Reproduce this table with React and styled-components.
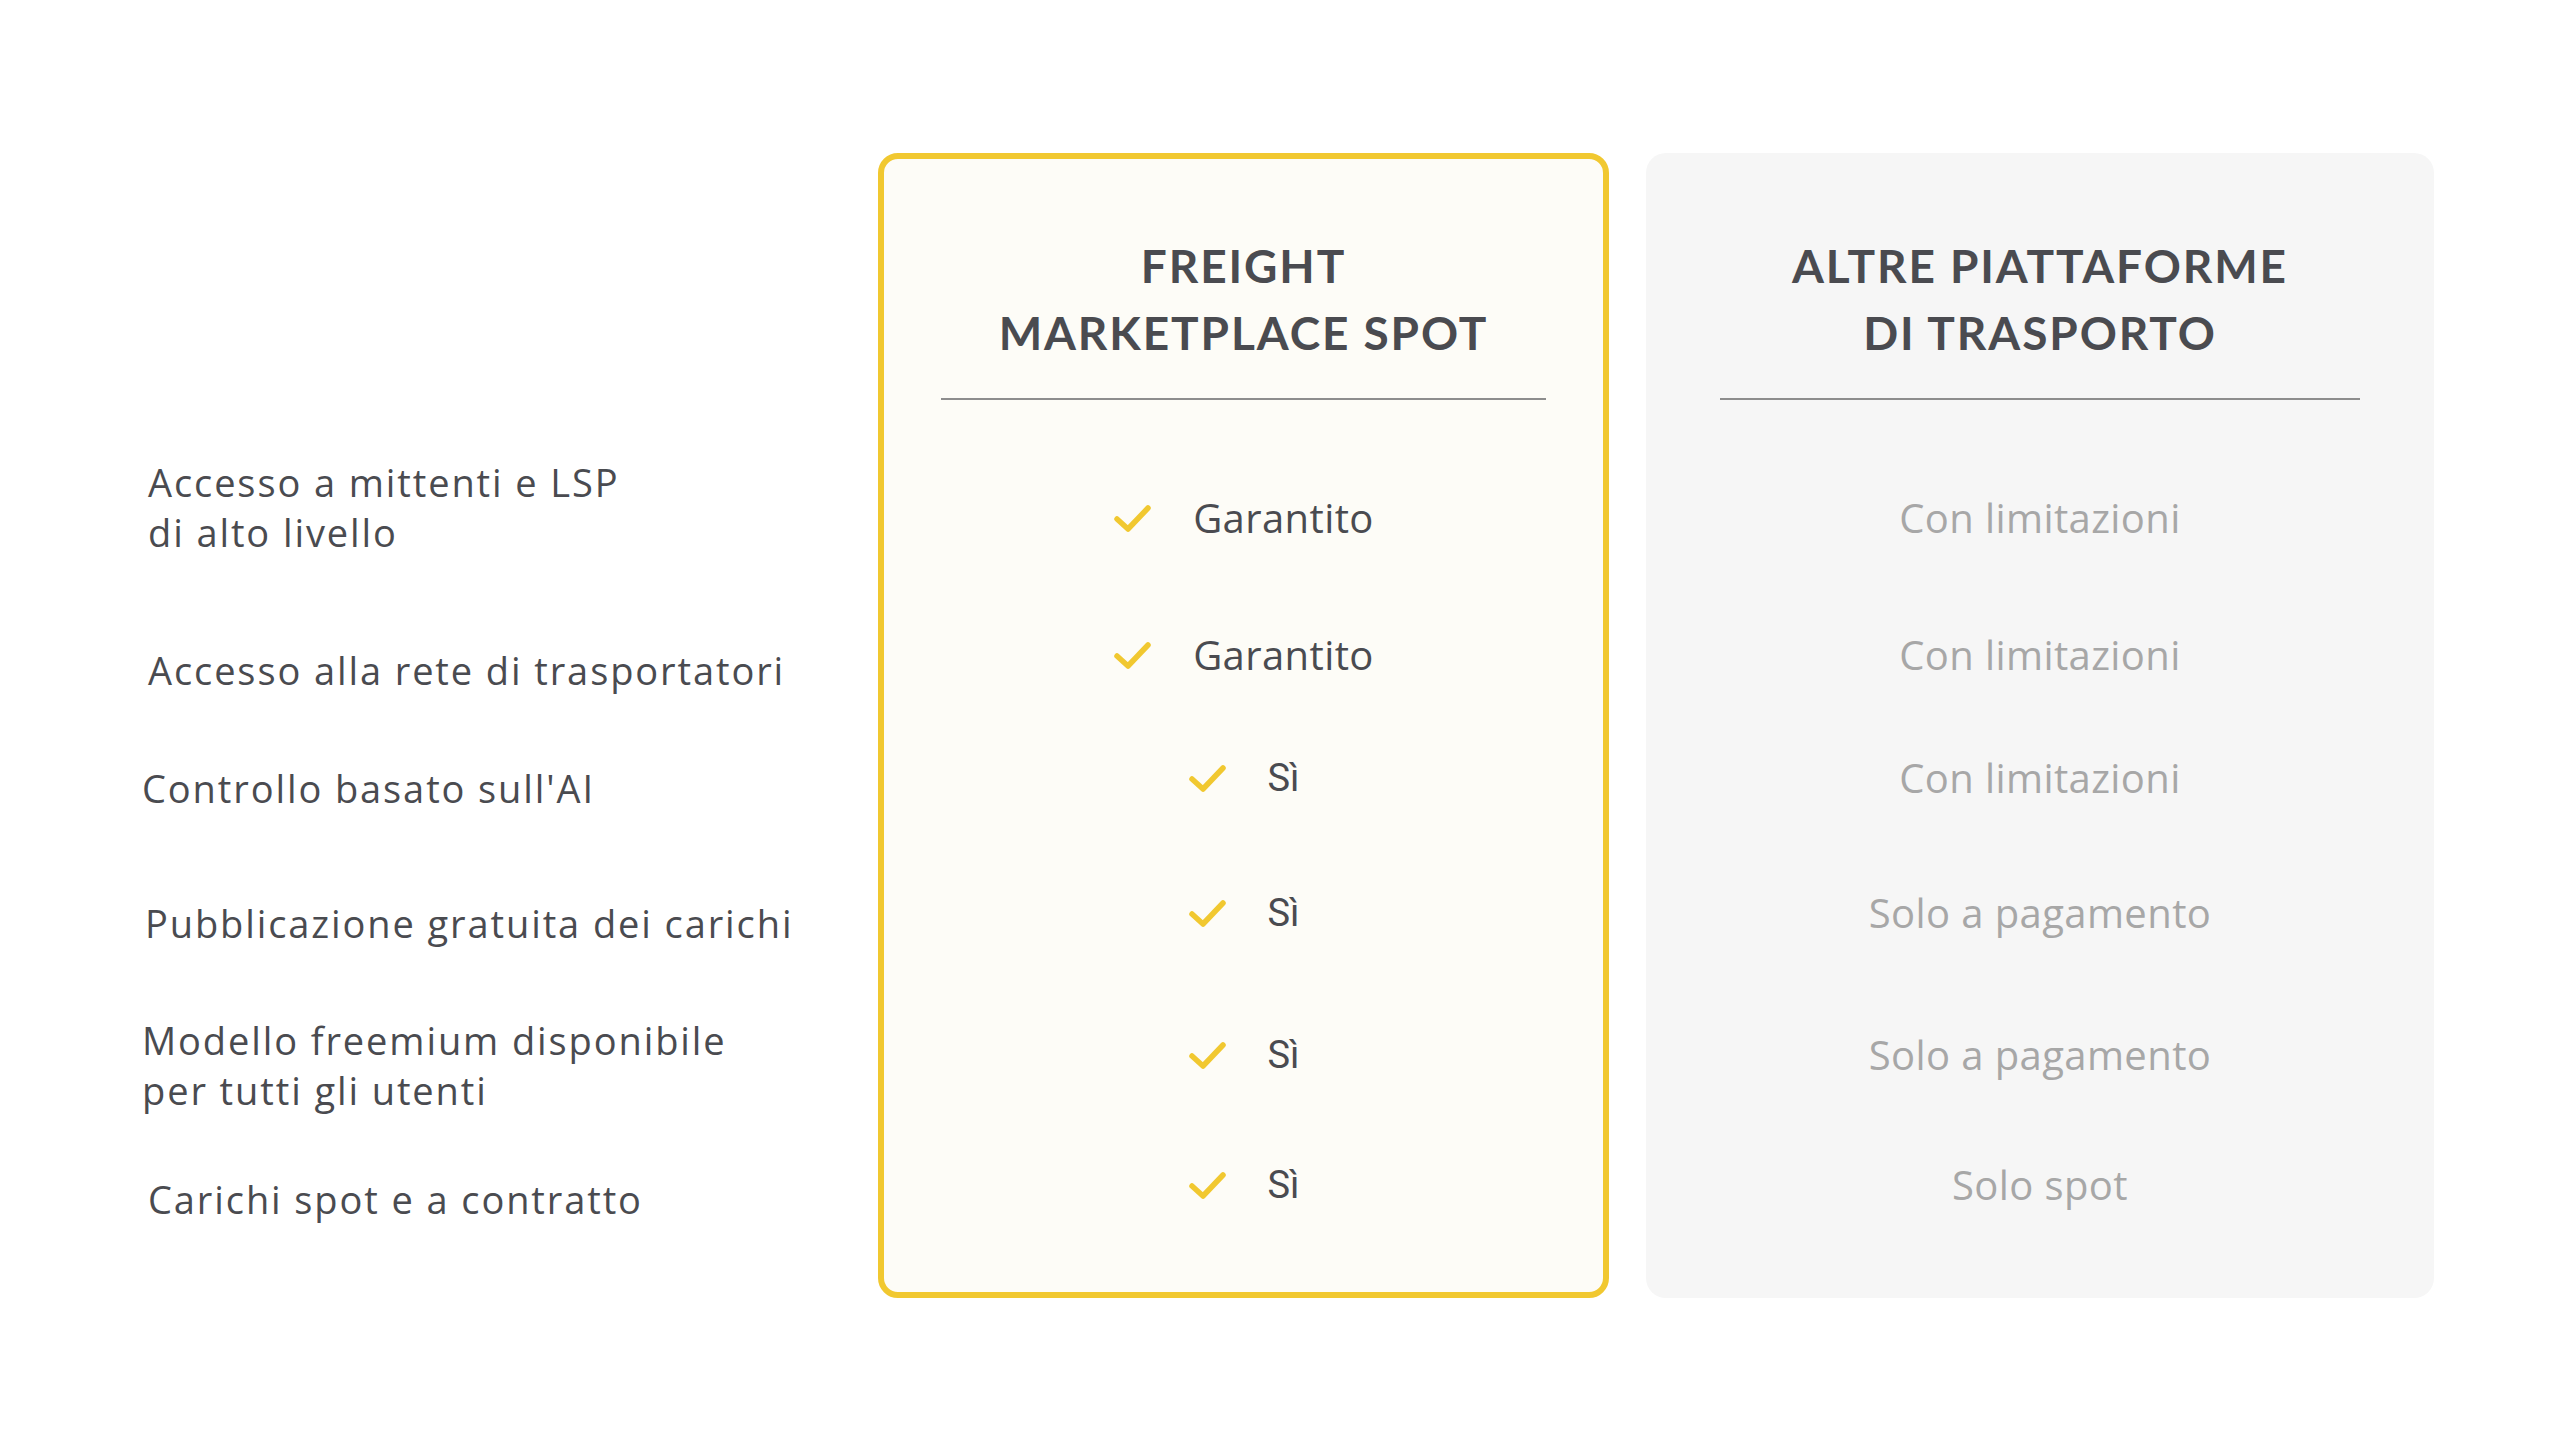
import React from 'react';
import styled, { createGlobalStyle } from 'styled-components';

const GlobalStyle = createGlobalStyle`
  html, body {
    margin: 0;
    padding: 0;
    background: #ffffff;
  }
  * {
    box-sizing: border-box;
  }
`;

const YELLOW = '#f1c830';
const INK = '#4a4b50';

const Page = styled.div`
  display: flex;
  align-items: flex-start;
  width: 2561px;
  height: 1441px;
  padding: 153px 0 0 142px;
  background: #ffffff;
`;

const LabelColumn = styled.div`
  display: flex;
  flex-direction: column;
  width: 736px;
  flex-shrink: 0;
`;

const Label = styled.div`
  margin-top: ${p => p.$gap}px;
  padding-left: ${p => p.$indent}px;
  font-family: 'Open Sans', 'Noto Sans', sans-serif;
  font-size: 38px;
  font-weight: 500;
  line-height: 50px;
  letter-spacing: 1.9px;
  font-variant-ligatures: none;
  color: ${INK};
  white-space: pre-line;
`;

const Card = styled.div`
  display: flex;
  flex-direction: column;
  flex-shrink: 0;
  width: ${p => p.$width}px;
  height: 1145px;
  margin-left: ${p => p.$offset}px;
  padding-top: 73px;
  border: 6px solid ${p => (p.$highlight ? YELLOW : 'transparent')};
  border-radius: 20px;
  background: ${p => (p.$highlight ? '#fdfcf7' : '#f6f6f6')};
`;

const Heading = styled.h2`
  margin: 0;
  font-family: Lato, 'Noto Sans', sans-serif;
  font-weight: 700;
  font-size: 46px;
  line-height: 67px;
  letter-spacing: 1.9px;
  text-align: center;
  color: ${INK};
  white-space: pre-line;
`;

const Divider = styled.div`
  height: 2px;
  margin: 32px ${p => p.$inset}px 0;
  background: #8d8d8d;
`;

const ValueRow = styled.div`
  display: flex;
  align-items: center;
  justify-content: center;
  gap: 40px;
  height: 60px;
  margin-top: ${p => p.$gap}px;
`;

const Value = styled.span`
  font-family: ${p => (p.$short ? 'Roboto' : "'Open Sans'")}, 'Noto Sans', sans-serif;
  font-size: ${p => (p.$short ? 38 : 40)}px;
  line-height: 60px;
  letter-spacing: ${p => (p.$short ? 0 : 0.4)}px;
  font-variant-ligatures: none;
  color: ${p => (p.$muted ? '#a7a7a7' : INK)};
`;

const Check = () => (
  <svg width="40" height="30" viewBox="0 0 40 30" fill="none">
    <polyline
      points="4,16 15,26 35,5"
      stroke={YELLOW}
      strokeWidth="5.5"
      strokeLinecap="round"
      strokeLinejoin="round"
    />
  </svg>
);

const labels = [
  { text: 'Accesso a mittenti e LSP\ndi alto livello', gap: 304, indent: 6 },
  { text: 'Accesso alla rete di trasportatori', gap: 88, indent: 6 },
  { text: "Controllo basato sull'AI", gap: 68, indent: 0 },
  { text: 'Pubblicazione gratuita dei carichi', gap: 85, indent: 3 },
  { text: 'Modello freemium disponibile\nper tutti gli utenti', gap: 67, indent: 0 },
  { text: 'Carichi spot e a contratto', gap: 59, indent: 6 },
];

const rowGaps = [88, 77, 63, 75, 82, 70];

const ours = ['Garantito', 'Garantito', 'Sì', 'Sì', 'Sì', 'Sì'];
const theirs = [
  'Con limitazioni',
  'Con limitazioni',
  'Con limitazioni',
  'Solo a pagamento',
  'Solo a pagamento',
  'Solo spot',
];

export default function App() {
  return (
    <>
      <GlobalStyle />
      <Page>
        <LabelColumn>
          {labels.map(l => (
            <Label key={l.text} $gap={l.gap} $indent={l.indent}>
              {l.text}
            </Label>
          ))}
        </LabelColumn>

        <Card $highlight $width={731} $offset={0}>
          <Heading>{'FREIGHT\nMARKETPLACE SPOT'}</Heading>
          <Divider $inset={57} />
          {ours.map((v, i) => (
            <ValueRow key={i} $gap={rowGaps[i]}>
              <Check />
              <Value $short={v === 'Sì'}>{v}</Value>
            </ValueRow>
          ))}
        </Card>

        <Card $width={788} $offset={37}>
          <Heading>{'ALTRE PIATTAFORME\nDI TRASPORTO'}</Heading>
          <Divider $inset={68} />
          {theirs.map((v, i) => (
            <ValueRow key={i} $gap={rowGaps[i]}>
              <Value $muted>{v}</Value>
            </ValueRow>
          ))}
        </Card>
      </Page>
    </>
  );
}
